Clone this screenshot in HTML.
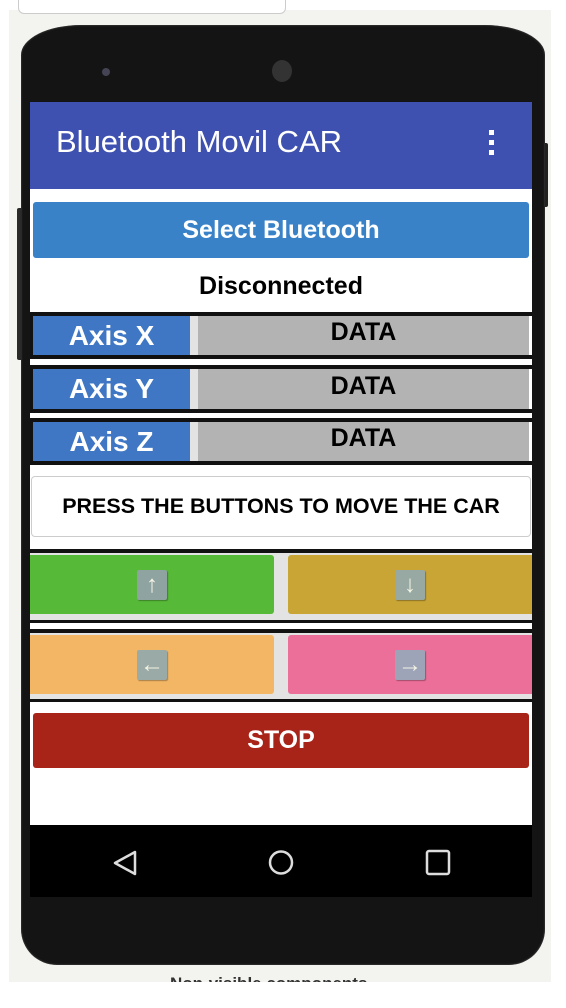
<!DOCTYPE html>
<html><head><meta charset="utf-8"><style>
*{margin:0;padding:0;box-sizing:border-box}
body{width:566px;height:1008px;background:#fff;position:relative;overflow:hidden;font-family:"Liberation Sans",sans-serif}
.a{position:absolute}
.c{display:flex;align-items:center;justify-content:center}
.ic{width:30px;height:30px;background:#8fa3a0;border-radius:2px;color:#f4f4e4;font-size:24px;font-weight:bold;box-shadow:1px 1px 1px rgba(0,0,0,.3)}
</style></head><body>
<div class="a" style="left:9px;top:10px;width:542px;height:972px;background:#f3f3ef"></div>
<div class="a" style="left:18px;top:-6px;width:268px;height:20px;background:#fff;border:1px solid #ccc;border-radius:6px"></div>
<div class="a" style="left:541px;top:143px;width:7px;height:64px;background:#222;border-radius:2px"></div>
<div class="a" style="left:17px;top:208px;width:7px;height:152px;background:#2a2a2a;border-radius:2px"></div>
<div class="a" style="left:21px;top:25px;width:524px;height:940px;background:#141414;border-radius:60px 60px 36px 36px / 30px 30px 36px 36px;box-shadow:0 0 2px #555 inset"></div>
<div class="a" style="left:102px;top:68px;width:8px;height:8px;border-radius:50%;background:#445"></div>
<div class="a" style="left:272px;top:60px;width:20px;height:22px;border-radius:50%;background:#333"></div>
<div class="a" style="left:30px;top:102px;width:502px;height:87px;background:#3f51b0"></div>
<div class="a" style="left:56px;top:124px;color:#fff;font-size:31px">Bluetooth Movil CAR</div>
<div class="a" style="left:489px;top:130px;width:5px;height:5px;background:#fff;box-shadow:0 10px #fff,0 20px #fff"></div>
<div class="a" style="left:30px;top:189px;width:502px;height:636px;background:#fff"></div>
<div class="a c" style="left:33px;top:202px;width:496px;height:56px;background:#3a82c8;border-radius:3px;color:#fff;font-size:25px;font-weight:bold">Select Bluetooth</div>
<div class="a c" style="left:30px;top:270px;width:502px;height:32px;font-size:25px;font-weight:bold">Disconnected</div>
<div class="a" style="left:30px;top:312px;width:502px;height:4px;background:#111"></div>
<div class="a" style="left:30px;top:355px;width:502px;height:4px;background:#111"></div>
<div class="a" style="left:30px;top:365px;width:502px;height:4px;background:#111"></div>
<div class="a" style="left:30px;top:409px;width:502px;height:4px;background:#111"></div>
<div class="a" style="left:30px;top:418px;width:502px;height:4px;background:#111"></div>
<div class="a" style="left:30px;top:461px;width:502px;height:4px;background:#111"></div>
<div class="a" style="left:30px;top:316px;width:3px;height:39px;background:#111"></div>
<div class="a" style="left:30px;top:369px;width:3px;height:40px;background:#111"></div>
<div class="a" style="left:30px;top:422px;width:3px;height:39px;background:#111"></div>
<div class="a c" style="left:33px;top:316px;width:157px;height:39px;background:#3f77c4;color:#fff;font-size:28px;font-weight:bold">Axis X</div>
<div class="a" style="left:190px;top:316px;width:8px;height:39px;background:#e3e3e3"></div>
<div class="a c" style="left:198px;top:316px;width:331px;height:39px;background:#b3b3b3;font-size:25px;font-weight:bold;padding-bottom:6px">DATA</div>
<div class="a c" style="left:33px;top:369px;width:157px;height:40px;background:#3f77c4;color:#fff;font-size:28px;font-weight:bold">Axis Y</div>
<div class="a" style="left:190px;top:369px;width:8px;height:40px;background:#e3e3e3"></div>
<div class="a c" style="left:198px;top:369px;width:331px;height:40px;background:#b3b3b3;font-size:25px;font-weight:bold;padding-bottom:6px">DATA</div>
<div class="a c" style="left:33px;top:422px;width:157px;height:39px;background:#3f77c4;color:#fff;font-size:28px;font-weight:bold">Axis Z</div>
<div class="a" style="left:190px;top:422px;width:8px;height:39px;background:#e3e3e3"></div>
<div class="a c" style="left:198px;top:422px;width:331px;height:39px;background:#b3b3b3;font-size:25px;font-weight:bold;padding-bottom:6px">DATA</div>
<div class="a c" style="left:31px;top:476px;width:500px;height:61px;border:1px solid #ccc;border-radius:4px;font-size:21.5px;font-weight:bold;white-space:nowrap">PRESS THE BUTTONS TO MOVE THE CAR</div>
<div class="a" style="left:30px;top:549px;width:502px;height:4px;background:#111"></div>
<div class="a" style="left:30px;top:553px;width:502px;height:67px;background:#e3e3e3"></div>
<div class="a" style="left:30px;top:620px;width:502px;height:3px;background:#111"></div>
<div class="a" style="left:30px;top:629px;width:502px;height:4px;background:#111"></div>
<div class="a" style="left:30px;top:633px;width:502px;height:66px;background:#e3e3e3"></div>
<div class="a" style="left:30px;top:699px;width:502px;height:3px;background:#111"></div>
<div class="a c" style="left:30px;top:555px;width:244px;height:59px;background:#56b938;border-radius:0 3px 3px 0"><div class="ic c">↑</div></div>
<div class="a c" style="left:288px;top:555px;width:244px;height:59px;background:#c9a535;border-radius:3px 0 0 3px"><div class="ic c" style="background:#98a8a2">↓</div></div>
<div class="a c" style="left:30px;top:635px;width:244px;height:59px;background:#f2b665;border-radius:0 3px 3px 0"><div class="ic c" style="background:#9aaaa6">←</div></div>
<div class="a c" style="left:288px;top:635px;width:244px;height:59px;background:#eb6f98;border-radius:3px 0 0 3px"><div class="ic c" style="background:#9ea4b8">→</div></div>
<div class="a c" style="left:33px;top:713px;width:496px;height:55px;background:#a82318;border-radius:3px;color:#fff;font-size:25px;font-weight:bold">STOP</div>
<div class="a" style="left:30px;top:825px;width:502px;height:72px;background:#000"></div>
<svg class="a" style="left:30px;top:825px" width="502" height="72">
<path d="M105 27 L85 38 L105 49 Z" fill="none" stroke="#ddd" stroke-width="2.5" stroke-linejoin="round"/>
<circle cx="251" cy="37.5" r="11" fill="none" stroke="#ddd" stroke-width="2.5"/>
<rect x="397" y="26" width="22" height="23" rx="2" fill="none" stroke="#ddd" stroke-width="2.5"/>
</svg>
<div class="a" style="left:170px;top:974px;font-size:17px;font-weight:bold;color:#333;white-space:nowrap">Non-visible components</div>
<div class="a" style="left:0;top:982px;width:566px;height:26px;background:#fff"></div>
</body></html>
